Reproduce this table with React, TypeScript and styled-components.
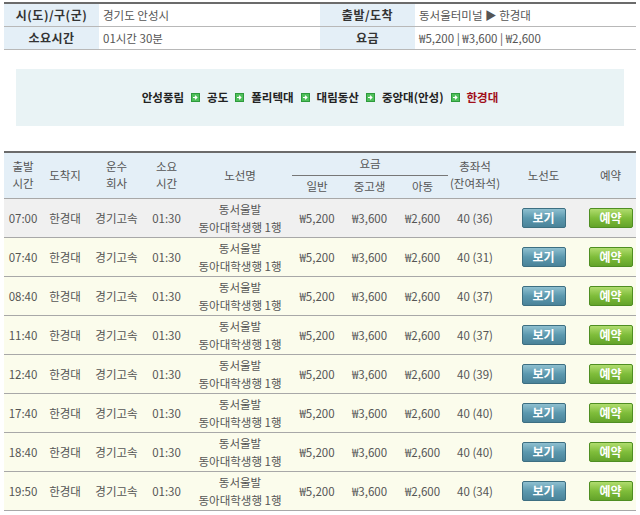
import styled, { createGlobalStyle } from 'styled-components';

const GlobalStyle = createGlobalStyle`
  body {
    margin: 0;
    background: #ffffff;
    font-family: "Noto Sans CJK KR", "Noto Sans", sans-serif;
    font-size: 12px;
    color: #555;
  }
`;

type Trip = { dep: string; seats: string; odd?: boolean };

const trips: Trip[] = [
  { dep: '07:00', seats: '40 (36)', odd: true },
  { dep: '07:40', seats: '40 (31)' },
  { dep: '08:40', seats: '40 (37)' },
  { dep: '11:40', seats: '40 (37)' },
  { dep: '12:40', seats: '40 (39)' },
  { dep: '17:40', seats: '40 (40)' },
  { dep: '18:40', seats: '40 (40)' },
  { dep: '19:50', seats: '40 (34)' },
];

const stops = ['안성풍림', '공도', '폴리텍대', '대림동산', '중앙대(안성)'];

function Arrow() {
  return (
    <ArrowIcon width="9" height="9" viewBox="0 0 9 9">
      <rect x="0" y="0" width="9" height="9" fill="#2e9a3c" />
      <rect x="1" y="1" width="7" height="7" fill="#4fbf5a" />
      <path d="M2 4.5h3.2M4 2.8l1.8 1.7L4 6.2" stroke="#fff" strokeWidth="1.2" fill="none" />
    </ArrowIcon>
  );
}

function App() {
  return (
    <>
      <GlobalStyle />
      <Page>
        <InfoTable>
          <tbody>
            <tr>
              <InfoLabel>시(도)/구(군)</InfoLabel>
              <InfoValue>경기도 안성시</InfoValue>
              <InfoLabel>출발/도착</InfoLabel>
              <InfoValue>동서울터미널 ▶ 한경대</InfoValue>
            </tr>
            <tr>
              <InfoLabel>소요시간</InfoLabel>
              <InfoValue>01시간 30분</InfoValue>
              <InfoLabel>요금</InfoLabel>
              <InfoValue>₩5,200 | ₩3,600 | ₩2,600</InfoValue>
            </tr>
          </tbody>
        </InfoTable>

        <RouteBox>
          {stops.map((s) => (
            <Stop key={s}>
              {s}
              <Arrow />
            </Stop>
          ))}
          <LastStop>한경대</LastStop>
        </RouteBox>

        <Schedule>
          <colgroup>
            <col style={{ width: 38 }} />
            <col style={{ width: 46 }} />
            <col style={{ width: 57 }} />
            <col style={{ width: 43 }} />
            <col style={{ width: 104 }} />
            <col style={{ width: 50 }} />
            <col style={{ width: 55 }} />
            <col style={{ width: 51 }} />
            <col style={{ width: 54 }} />
            <col style={{ width: 83 }} />
            <col style={{ width: 51 }} />
          </colgroup>
          <thead>
            <tr>
              <Head rowSpan={2}>출발<br />시간</Head>
              <Head rowSpan={2}>도착지</Head>
              <Head rowSpan={2}>운수<br />회사</Head>
              <Head rowSpan={2}>소요<br />시간</Head>
              <Head rowSpan={2}>노선명</Head>
              <Head colSpan={3} $group>요금</Head>
              <Head rowSpan={2}>총좌석<br />(잔여좌석)</Head>
              <Head rowSpan={2}>노선도</Head>
              <Head rowSpan={2}>예약</Head>
            </tr>
            <tr>
              <Head>일반</Head>
              <Head>중고생</Head>
              <Head>아동</Head>
            </tr>
          </thead>
          <tbody>
            {trips.map((t) => (
              <Row key={t.dep} $odd={t.odd}>
                <Cell>{t.dep}</Cell>
                <Cell>한경대</Cell>
                <Cell>경기고속</Cell>
                <Cell>01:30</Cell>
                <Cell>동서울발<br />동아대학생행 1행</Cell>
                <Cell>₩5,200</Cell>
                <Cell>₩3,600</Cell>
                <Cell>₩2,600</Cell>
                <Cell>{t.seats}</Cell>
                <Cell><Btn $tone="blue">보기</Btn></Cell>
                <Cell><Btn $tone="green">예약</Btn></Cell>
              </Row>
            ))}
          </tbody>
        </Schedule>
      </Page>
    </>
  );
}

export default App;

const Page = styled.div`
  width: 632px;
  padding: 2px 4px 0;
`;

const InfoTable = styled.table`
  width: 632px;
  border-collapse: collapse;
  table-layout: fixed;
  border-top: 2px solid #6b6b6b;

  tr {
    height: 23px;
    border-bottom: 1px solid #b8b8b8;
  }
`;

const InfoLabel = styled.td`
  width: 95px;
  padding: 0;
  background: #e4eff7;
  color: #333;
  font-weight: bold;
  text-align: center;
  letter-spacing: 0.5px;
`;

const InfoValue = styled.td`
  padding: 0 0 0 4px;
  color: #555;
  font-size: 11.5px;
`;

const RouteBox = styled.div`
  margin: 19px 12px 0;
  height: 57px;
  background: #e9f3f5;
  display: flex;
  align-items: center;
  justify-content: center;
  gap: 7px;
  font-weight: bold;
  font-size: 11.5px;
  color: #222;
`;

const Stop = styled.span`
  display: inline-flex;
  align-items: center;
  gap: 7px;
`;

const ArrowIcon = styled.svg`
  display: block;
`;

const LastStop = styled.span`
  color: #a10f1a;
`;

const Schedule = styled.table`
  margin-top: 25px;
  width: 632px;
  border-collapse: collapse;
  table-layout: fixed;
  border-top: 2px solid #6b6b6b;
`;

const Head = styled.th<{ $group?: boolean }>`
  background: #e4eff7;
  color: #555;
  font-weight: normal;
  font-size: 11.5px;
  line-height: 17px;
  white-space: nowrap;
  padding: 0;
  height: 22px;
  text-align: center;
  border-bottom: ${(p) => (p.$group ? '1px solid #777' : 'none')};
`;

const Row = styled.tr<{ $odd?: boolean }>`
  height: 39px;
  background: ${(p) => (p.$odd ? '#f0f0f0' : '#fbfcec')};
  border-top: 1px solid #a8a8a8;
  border-bottom: 1px solid #a8a8a8;
`;

const Cell = styled.td`
  padding: 0;
  text-align: center;
  color: #555;
  line-height: 18px;
  font-size: 11.5px;
`;

const Btn = styled.button<{ $tone: 'blue' | 'green' }>`
  width: 44px;
  height: 20px;
  border: 1px solid ${(p) => (p.$tone === 'blue' ? '#3d6f82' : '#4f8e22')};
  border-radius: 2px;
  padding: 0;
  color: #fff;
  font-family: inherit;
  font-weight: bold;
  font-size: 12px;
  line-height: 18px;
  cursor: pointer;
  background: ${(p) =>
    p.$tone === 'blue'
      ? 'linear-gradient(#8fc0d0, #5b98ae 50%, #4a8399)'
      : 'linear-gradient(#b0dc6e, #7fbd3a 50%, #63a32a)'};
`;
